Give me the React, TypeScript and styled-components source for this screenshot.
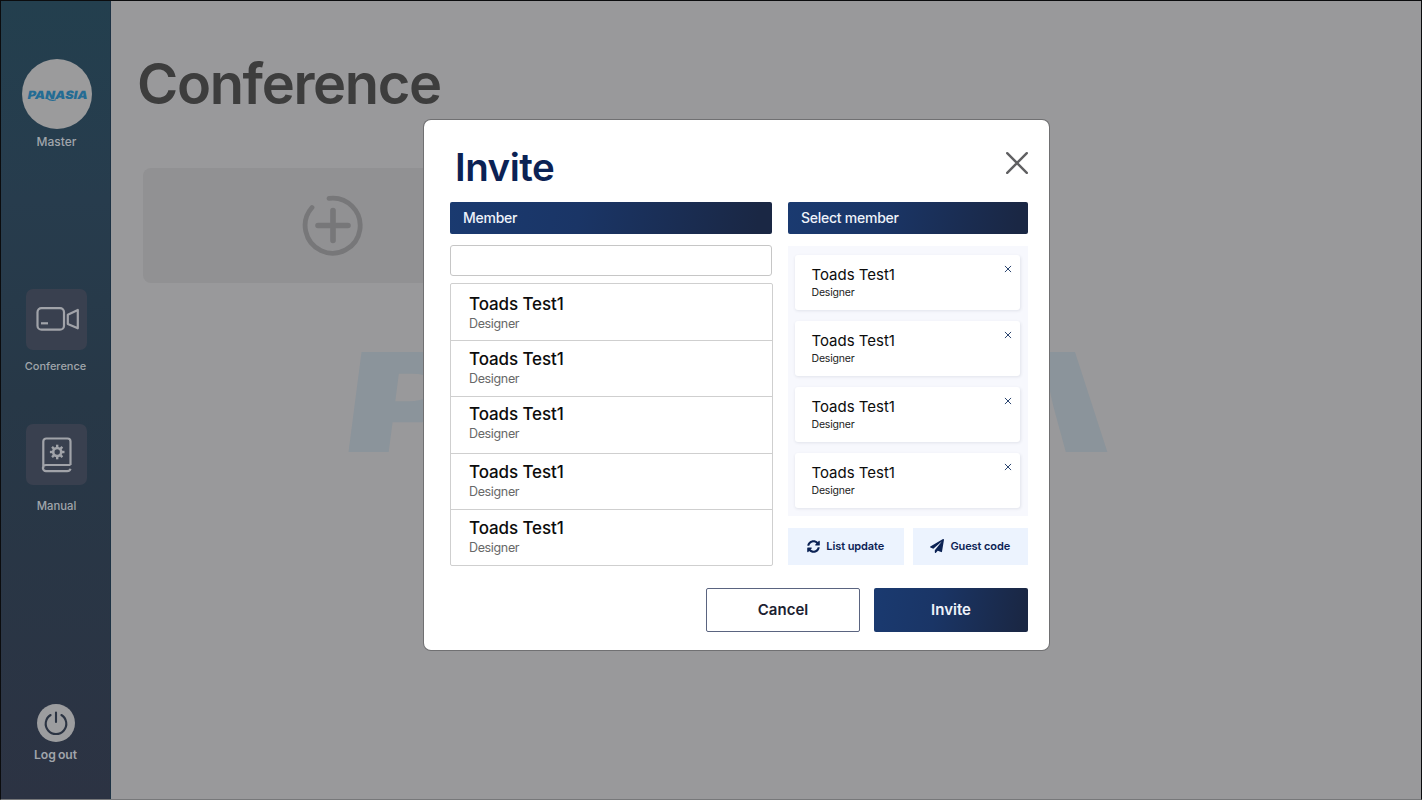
import React, { FC } from 'react';
import { FaPaperPlane, FaSyncAlt } from 'react-icons/fa';
import styled, { createGlobalStyle, css } from 'styled-components';

const Navy = '#0b2254';
const Gradient = 'linear-gradient(100deg, #1a3a70 0%, #1a3566 40%, #1a2744 95%)';

const GlobalStyle = createGlobalStyle`
  * {
    box-sizing: border-box;
  }

  body {
    margin: 0;
    font-family: Inter, 'Liberation Sans', sans-serif;
    overflow: hidden;
  }

  button {
    font-family: inherit;
    padding: 0;
    border: 0;
  }
`;

const Page = styled.div`
  position: relative;
  display: flex;
  width: 1422px;
  height: 800px;
  border: 1px solid #0b0c0e;
  border-bottom-color: #77787a;
  background: #99999b;
`;

const Sidebar = styled.nav`
  display: flex;
  flex-direction: column;
  align-items: center;
  width: 110px;
  border-right: 1px solid #1d3244;
  background: linear-gradient(#233f4e 0%, #273c4d 25%, #273847 50%, #2c3343 100%);
`;

const Avatar = styled.div`
  display: flex;
  align-items: center;
  justify-content: center;
  width: 70px;
  height: 70px;
  margin: 58px 0 0 2px;
  border-radius: 50%;
  background: #9b9b9c;
`;

const NavLabel = styled.span<{
  $gap: number;
  $size?: number;
  $bold?: boolean;
  $indent?: number;
}>`
  margin-top: ${({ $gap }) => $gap}px;
  padding-left: ${({ $indent }) => $indent ?? 0}px;
  font-size: ${({ $size }) => $size ?? 12}px;
  font-weight: ${({ $bold }) => ($bold ? 600 : 500)};
  line-height: 16px;
  word-spacing: -1px;
  color: #a0a5ab;
`;

const NavTile = styled.div<{ $gap: number }>`
  display: flex;
  align-items: center;
  justify-content: center;
  width: 61px;
  height: 61px;
  margin: ${({ $gap }) => $gap}px 0 0 1px;
  border-radius: 7px;
  background: #39404f;
`;

const Power = styled.div`
  display: flex;
  align-items: center;
  justify-content: center;
  width: 38px;
  height: 38px;
  margin-top: 190px;
  border-radius: 50%;
  background: #9c9d9f;
`;

const Main = styled.main`
  flex: 1;
  padding: 48px 0 0 32px;
`;

const PageTitle = styled.h1`
  margin: 0 0 0 -6px;
  font-size: 56px;
  font-weight: 600;
  line-height: 70px;
  letter-spacing: -1.35px;
  color: #3d3d3d;
`;

const AddCard = styled.div`
  display: flex;
  align-items: center;
  justify-content: center;
  width: 379px;
  height: 115px;
  margin-top: 49px;
  border-radius: 8px;
  background: #919193;
`;

const Watermark = styled.svg`
  position: absolute;
  left: 339px;
  top: 339px;
`;

const Modal = styled.section`
  position: absolute;
  left: 423px;
  top: 119px;
  width: 625px;
  height: 530px;
  padding: 25px 21px 0 26px;
  border-radius: 7px;
  background: #fff;
  box-shadow: 0 0 0 1px #707072;
`;

const ModalHeader = styled.header`
  display: flex;
  justify-content: space-between;
  height: 57px;
`;

const ModalTitle = styled.h2`
  margin: 0 0 0 5px;
  font-size: 38.5px;
  font-weight: 600;
  line-height: 45px;
  letter-spacing: -0.5px;
  color: ${Navy};
`;

const Columns = styled.div`
  display: grid;
  grid-template-columns: 323px 240px;
  column-gap: 15px;
`;

const ColumnTitle = styled.div<{ $inset?: number }>`
  width: calc(100% - ${({ $inset = 0 }) => $inset}px);
  height: 32px;
  padding-left: 13px;
  border-radius: 2px;
  background: ${Gradient};
  font-size: 14px;
  font-weight: 500;
  line-height: 32px;
  letter-spacing: -0.25px;
  color: #eef2fa;
`;

const Search = styled.input`
  display: block;
  width: 322px;
  height: 31px;
  margin-top: 11px;
  border: 1px solid #c6c6c6;
  border-radius: 3px;
  outline: 0;
`;

const MemberList = styled.ul`
  height: 283px;
  margin: 7px 0 0;
  padding: 0;
  border: 1px solid #cfcfcf;
  border-radius: 2px;
  list-style: none;
`;

const Member = styled.li<{ $top: number }>`
  height: 56.2px;
  padding: ${({ $top }) => $top}px 0 0 18px;

  & + & {
    border-top: 1px solid #cfcfcf;
  }
`;

const Name = styled.div<{ $small?: boolean }>`
  color: #0c0c0c;
  line-height: 20px;
  ${({ $small }) =>
    $small
      ? css`
          font-size: 15px;
          letter-spacing: -0.02px;
        `
      : css`
          font-size: 17px;
          font-weight: 450;
          letter-spacing: -0.1px;
        `}
`;

const Role = styled.div<{ $small?: boolean }>`
  font-size: ${({ $small }) => ($small ? 10.5 : 12.5)}px;
  line-height: ${({ $small }) => ($small ? 15 : 19)}px;
  letter-spacing: ${({ $small }) => ($small ? -0.2 : -0.35)}px;
  color: ${({ $small }) => ($small ? '#222' : '#686868')};
`;

const Selected = styled.div`
  display: flex;
  flex-direction: column;
  gap: 10.9px;
  height: 270px;
  margin-top: 12px;
  padding: 9px 8px 0 7px;
  background: #f7f8fd;
`;

const SelectedCard = styled.div`
  display: flex;
  justify-content: space-between;
  height: 55px;
  padding: 10px 8px 0 16.5px;
  border-radius: 3px;
  background: #fff;
  box-shadow: 0.5px 1px 3px rgba(40, 50, 80, 0.1);
`;

const Tools = styled.div`
  display: grid;
  grid-template-columns: 1fr 1fr;
  gap: 9px;
  margin-top: 12px;
`;

const ToolButton = styled.button`
  display: flex;
  align-items: center;
  justify-content: center;
  gap: 6px;
  height: 37px;
  padding-bottom: 1px;
  background: #ecf3fe;
  font-size: 11px;
  font-weight: 600;
  letter-spacing: -0.1px;
  color: ${Navy};
`;

const Footer = styled.footer`
  display: flex;
  justify-content: flex-end;
  gap: 14px;
  margin-top: 22px;
`;

const Action = styled.button<{ $primary?: boolean }>`
  width: 154px;
  height: 43.5px;
  padding-bottom: 1px;
  border-radius: 2px;
  font-size: 15px;
  font-weight: 600;
  ${({ $primary }) =>
    $primary
      ? css`
          background: ${Gradient};
          color: #eef2fa;
        `
      : css`
          border: 1px solid #5a6480;
          background: #fff;
          color: #1b2130;
        `}
`;

const Cross: FC<{ size: number; color: string; width: number }> = ({
  size,
  color,
  width
}) => (
  <svg width={size} height={size} viewBox={`0 0 ${size} ${size}`}>
    <path
      d={`M1.2 1.2L${size - 1.2} ${size - 1.2}M${size - 1.2} 1.2L1.2 ${size - 1.2}`}
      stroke={color}
      strokeWidth={width}
      strokeLinecap="round"
    />
  </svg>
);

const LargeCross = styled.span`
  margin-top: 7px;
`;

const Remove = styled.span`
  line-height: 0;
`;

const Logo: FC = () => (
  <svg width="62" height="16" viewBox="0 0 62 16">
    <text
      transform="matrix(1 0 -0.2 1 1 12.5)"
      textLength="60"
      lengthAdjust="spacingAndGlyphs"
      fontSize="11.5"
      fontWeight="900"
      fill="#246c94"
    >
      PANASIA
    </text>
    <path d="M21 12.2q4 3.4 9 1.6" fill="none" stroke="#246c94" strokeWidth="1.2" />
  </svg>
);

const CameraIcon: FC = () => (
  <svg width="46" height="28" viewBox="0 0 46 28" fill="none" stroke="#a1a3a9" strokeWidth="2.2">
    <rect x="4.5" y="2.2" width="26.5" height="21.5" rx="4" />
    <path d="M34.8 8.7L44.800 4v18.3L34.8 18z" strokeLinejoin="round" />
    <path d="M8 17.3h7" />
  </svg>
);

const ManualIcon: FC = () => (
  <svg width="32" height="36" viewBox="-2 0 32 36" fill="none" stroke="#a1a3a9" strokeWidth="2.2">
    <path
      d="M28.5 28H4a3 3 0 0 0 0 6.2H25a3.5 3.5 0 0 0 3.5-2.5M1.3 31V4.5a3 3 0 0 1 3-3h21.2a3 3 0 0 1 3 3V28"
      strokeLinejoin="round"
    />
    <circle cx="15.2" cy="15" r="4" strokeWidth="2.6" />
    {[0, 45, 90, 135, 180, 225, 270, 315].map(angle => (
      <path
        key={angle}
        d="M15.2 10.5V7.7"
        strokeWidth="2.4"
        transform={`rotate(${angle} 15.2 15)`}
      />
    ))}
  </svg>
);

const PowerIcon: FC = () => (
  <svg
    width="26"
    height="26"
    viewBox="0 0 26 26"
    fill="none"
    stroke="#2b3443"
    strokeWidth="2.1"
    strokeLinecap="round"
  >
    <path d="M7.6 5a10.3 10.3 0 1 0 10.8 0M13 2.5v9.5" />
  </svg>
);

const AddIcon: FC = () => (
  <svg
    width="62"
    height="62"
    viewBox="0 0 62 62"
    fill="none"
    stroke="#777779"
    strokeWidth="4.8"
    strokeLinecap="round"
  >
    <path d="M27 3.4A27.5 27.5 0 1 1 10 12.5" />
    <path d="M31 15.5v30M16 30.5h30" strokeWidth="5.6" />
  </svg>
);

// top padding of each row
const members = [10, 8, 7, 8, 8];

const App: FC = () => (
  <>
    <GlobalStyle />
    <Page>
      <Sidebar>
        <Avatar>
          <Logo />
        </Avatar>
        <NavLabel $gap={5} $indent={2}>
          Master
        </NavLabel>
        <NavTile $gap={139}>
          <CameraIcon />
        </NavTile>
        <NavLabel $gap={8} $size={11}>
          Conference
        </NavLabel>
        <NavTile $gap={50}>
          <ManualIcon />
        </NavTile>
        <NavLabel $gap={13} $size={11.3} $indent={2}>
          Manual
        </NavLabel>
        <Power>
          <PowerIcon />
        </Power>
        <NavLabel $gap={5} $size={12.2} $bold>
          Log out
        </NavLabel>
      </Sidebar>
      <Main>
        <PageTitle>Conference</PageTitle>
        <AddCard>
          <AddIcon />
        </AddCard>
      </Main>
      {/* the last letter has no crossbar */}
      <Watermark width="780" height="126" viewBox="0 0 780 126">
        <g fill="#8b949b" fontSize="137.5" fontWeight="900">
          <text transform="matrix(1.48 0 -0.13 1 -1 112)">P</text>
          <text transform="matrix(1.35 0 -0.13 1 624 112)">Λ</text>
        </g>
      </Watermark>
      <Modal>
        <ModalHeader>
          <ModalTitle>Invite</ModalTitle>
          <LargeCross>
            <Cross size={22} color="#606062" width={2.4} />
          </LargeCross>
        </ModalHeader>
        <Columns>
          <div>
            <ColumnTitle $inset={1}>Member</ColumnTitle>
            <Search />
            <MemberList>
              {members.map((top, index) => (
                <Member key={index} $top={top}>
                  <Name>Toads Test1</Name>
                  <Role>Designer</Role>
                </Member>
              ))}
            </MemberList>
          </div>
          <div>
            <ColumnTitle>Select member</ColumnTitle>
            <Selected>
              {members.slice(0, 4).map((_, index) => (
                <SelectedCard key={index}>
                  <div>
                    <Name $small>Toads Test1</Name>
                    <Role $small>Designer</Role>
                  </div>
                  <Remove>
                    <Cross size={8} color="#2c4570" width={1} />
                  </Remove>
                </SelectedCard>
              ))}
            </Selected>
            <Tools>
              <ToolButton>
                <FaSyncAlt size={13} />
                List update
              </ToolButton>
              <ToolButton>
                <FaPaperPlane size={14} />
                Guest code
              </ToolButton>
            </Tools>
          </div>
        </Columns>
        <Footer>
          <Action>Cancel</Action>
          <Action $primary>Invite</Action>
        </Footer>
      </Modal>
    </Page>
  </>
);

export default App;
